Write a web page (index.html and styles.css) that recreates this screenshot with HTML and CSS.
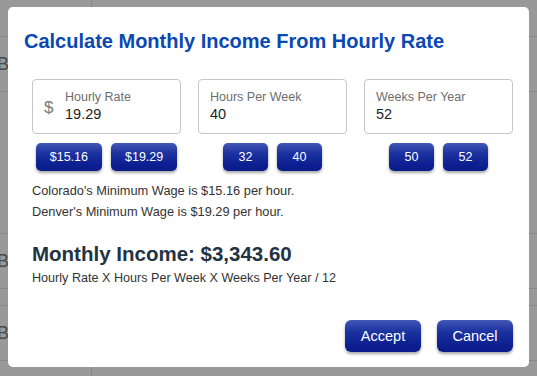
FILE: index.html
```html
<!DOCTYPE html>
<html>
<head>
<meta charset="utf-8">
<link rel="stylesheet" href="styles.css">
</head>
<body>
<div class="page">
  <div class="row r1"><div class="c1"></div><div class="c2"></div></div>
  <div class="row r2"><div class="c1">B</div><div class="c2"></div></div>
  <div class="row r5"><div class="c1"></div><div class="c2"></div></div>
  <div class="row r2"><div class="c1">B</div><div class="c2"></div></div>
  <div class="row r3"><div class="c1"></div><div class="c2"></div></div>
  <div class="row r2"><div class="c1">B</div><div class="c2"></div></div>
  <div class="row r3"><div class="c1"></div><div class="c2"></div></div>
</div>

<div class="modal">
  <h1 class="title">Calculate Monthly Income From Hourly Rate</h1>
  <div class="content">
    <div class="fields">
      <div class="field-col">
        <div class="field">
          <span class="prefix">$</span>
          <div class="field-inner">
            <div class="label">Hourly Rate</div>
            <div class="value">19.29</div>
          </div>
        </div>
        <div class="chips">
          <button class="btn chip">$15.16</button>
          <button class="btn chip">$19.29</button>
        </div>
      </div>
      <div class="field-col">
        <div class="field">
          <div class="field-inner">
            <div class="label">Hours Per Week</div>
            <div class="value">40</div>
          </div>
        </div>
        <div class="chips">
          <button class="btn chip">32</button>
          <button class="btn chip">40</button>
        </div>
      </div>
      <div class="field-col">
        <div class="field">
          <div class="field-inner">
            <div class="label">Weeks Per Year</div>
            <div class="value">52</div>
          </div>
        </div>
        <div class="chips">
          <button class="btn chip">50</button>
          <button class="btn chip">52</button>
        </div>
      </div>
    </div>
    <p class="note first">Colorado's Minimum Wage is $15.16 per hour.</p>
    <p class="note">Denver's Minimum Wage is $19.29 per hour.</p>
    <h2 class="result">Monthly Income: $3,343.60</h2>
    <p class="formula">Hourly Rate X Hours Per Week X Weeks Per Year / 12</p>
  </div>
  <div class="actions">
    <button class="btn action">Accept</button>
    <button class="btn action">Cancel</button>
  </div>
</div>
</body>
</html>
```

FILE: styles.css
```css
html, body {
  margin: 0;
  padding: 0;
}
body {
  background: #999999;
  font-family: "Liberation Sans", Arial, Helvetica, sans-serif;
  width: 537px;
  height: 376px;
  overflow: hidden;
  position: relative;
}
.page {
  display: flex;
  flex-direction: column;
}
.row {
  display: flex;
  border-bottom: 1px solid #878787;
  box-sizing: border-box;
}
.r1 { height: 37px; }
.r2 { height: 55px; }
.r3 { height: 17px; }
.r5 { height: 142px; }
.c1 {
  width: 95px;
  margin-left: -3px;
  border-right: 1px solid #878787;
  color: #4a4a4a;
  font-size: 18px;
  display: flex;
  align-items: center;
  box-sizing: border-box;
}
.c2 { flex: 1; }

.modal {
  position: absolute;
  left: 8px;
  top: 7px;
  width: 521px;
  height: 360px;
  background: #ffffff;
  border-radius: 5px;
  box-sizing: border-box;
  padding: 22px 16px 15px 16px;
  display: flex;
  flex-direction: column;
}
.title {
  margin: 0;
  font-size: 20px;
  font-weight: bold;
  color: #0a48b4;
  line-height: 24px;
}
.content {
  padding-left: 8px;
  margin-top: 26px;
  flex: 1;
}
.fields {
  display: grid;
  grid-template-columns: 1fr 1fr 1fr;
  column-gap: 17px;
}
.field-col {
  display: flex;
  flex-direction: column;
  align-items: stretch;
}
.field {
  height: 55px;
  border: 1px solid #c6c6c6;
  border-radius: 4px;
  box-sizing: border-box;
  display: flex;
  align-items: center;
  padding-left: 11px;
}
.prefix {
  color: #7a7a7a;
  font-size: 17px;
  width: 21px;
  margin-top: 3px;
}
.field-inner {
  display: flex;
  flex-direction: column;
}
.label {
  font-size: 12.5px;
  color: #6e6e6e;
  line-height: 16px;
}
.value {
  font-size: 14.5px;
  color: #1e1e1e;
  line-height: 19px;
}
.chips {
  display: flex;
  justify-content: center;
  gap: 9px;
  margin-top: 9px;
}
.btn {
  font-family: "Liberation Sans", Arial, Helvetica, sans-serif;
  color: #ffffff;
  border: none;
  background: linear-gradient(to bottom, #4358b6 0%, #1d33a0 35%, #0d2092 75%, #0a1c88 100%);
  box-shadow: 0 2px 3px rgba(0, 0, 0, 0.35);
  cursor: pointer;
  padding: 0;
}
.chip {
  height: 28px;
  border-radius: 5px;
  font-size: 12.5px;
  padding: 0 14px;
  min-width: 45px;
}
.note {
  margin: 0;
  font-size: 12.8px;
  color: #333333;
  line-height: 21px;
}
.note.first { margin-top: 9px; }
.result {
  margin: 19px 0 0 0;
  font-size: 20.5px;
  font-weight: bold;
  color: #233343;
  line-height: 26px;
}
.formula {
  margin: 1px 0 0 0;
  font-size: 12.6px;
  color: #333333;
  line-height: 20px;
}
.actions {
  display: flex;
  justify-content: flex-end;
  gap: 16px;
}
.action {
  width: 76px;
  height: 32px;
  border-radius: 6px;
  font-size: 14.5px;
}
```
